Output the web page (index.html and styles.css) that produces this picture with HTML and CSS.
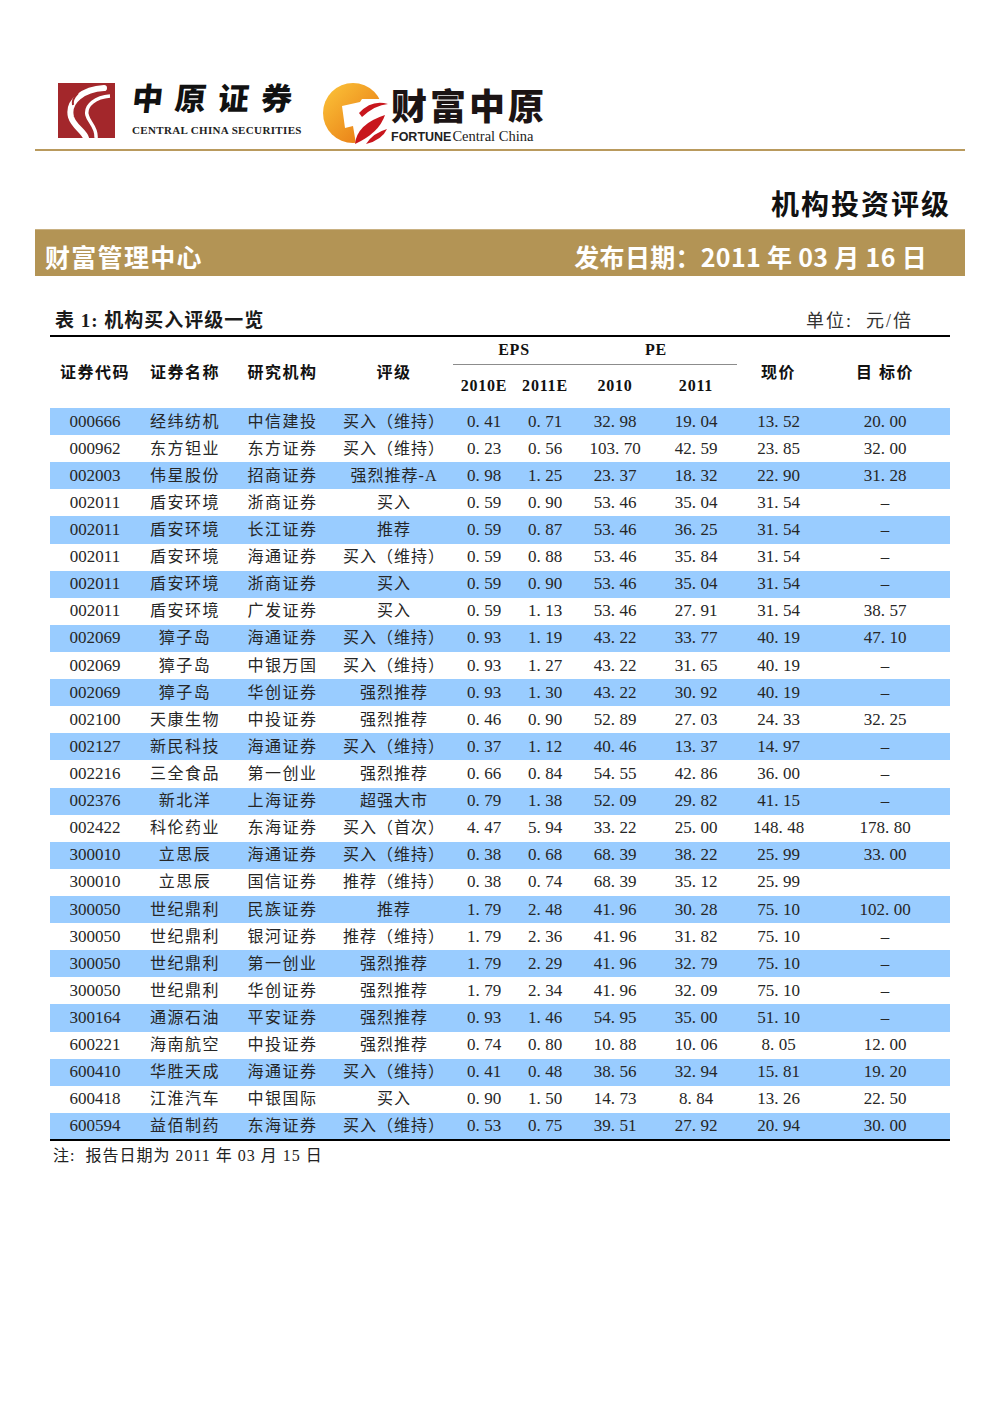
FILE: index.html
```html
<!DOCTYPE html>
<html lang="zh">
<head>
<meta charset="utf-8">
<title>机构投资评级</title>
<link rel="stylesheet" href="styles.css">
</head>
<body>
<header class="top">
  <div class="logos">
    <div class="logo ccs">
      <svg class="mark1" width="57" height="55" viewBox="0 0 57 55">
        <rect width="57" height="55" fill="#a3272b"/>
        <path d="M46 5 C26 6 9 18 13 34 C16 44 26 48 28 55" stroke="#fff" stroke-width="6" fill="none" stroke-linecap="round"/>
        <path d="M52 13 C38 14 27 22 29 32 C31 40 39 44 38 55" stroke="#fff" stroke-width="3.5" fill="none"/>
        <path d="M20 10 C16 14 14 18 15 22" stroke="#a3272b" stroke-width="2" fill="none"/>
      </svg>
      <div class="ccs-text">
        <div class="ccs-cn">中原证券</div>
        <div class="ccs-en">CENTRAL CHINA SECURITIES</div>
      </div>
    </div>
    <div class="logo fcc">
      <svg class="mark2" width="66" height="62" viewBox="0 0 66 62">
        <defs>
          <linearGradient id="og" x1="0" y1="0" x2="1" y2="1">
            <stop offset="0" stop-color="#fcc63a"/>
            <stop offset="1" stop-color="#e5700f"/>
          </linearGradient>
        </defs>
        <circle cx="31" cy="31" r="30" fill="url(#og)"/>
        <polygon points="20,24 38,20 40,17 66,17 66,62 34,62 31,44 23,46" fill="#fff"/>
        <path d="M37 31 Q50 17 66 22 Q53 23 40 35 Z" fill="#c8161d"/>
        <path d="M33 62 Q35 42 63 33 Q57 51 33 62 Z" fill="#c8161d"/>
        <path d="M44 62 Q51 51 65 47 Q60 58 44 62 Z" fill="#c8161d"/>
      </svg>
      <div class="fcc-text">
        <div class="fcc-cn">财富中原</div>
        <div class="fcc-en"><span class="fcc-bold">FORTUNE</span><span class="fcc-light">Central China</span></div>
      </div>
    </div>
  </div>
</header>
<div class="gold-rule"></div>
<div class="doc-title">机构投资评级</div>
<div class="banner">
  <span class="banner-left">财富管理中心</span>
  <span class="banner-right">发布日期：2011 年 03 月 16 日</span>
</div>
<section class="report">
  <div class="caption">
    <span class="cap-title">表 1: 机构买入评级一览</span>
    <span class="cap-unit">单位:&nbsp; 元/倍</span>
  </div>
  <table class="rating">
    <colgroup>
      <col class="c1"><col class="c2"><col class="c3"><col class="c4"><col class="c5">
      <col class="c6"><col class="c7"><col class="c8"><col class="c9"><col class="c10">
    </colgroup>
    <thead>
      <tr class="h1">
        <th rowspan="2" class="cn">证券代码</th>
        <th rowspan="2" class="cn">证券名称</th>
        <th rowspan="2" class="cn">研究机构</th>
        <th rowspan="2" class="cn">评级</th>
        <th colspan="2" class="grp">EPS</th>
        <th colspan="2" class="grp">PE</th>
        <th rowspan="2" class="cn">现价</th>
        <th rowspan="2" class="cn">目 标价</th>
      </tr>
      <tr class="h2">
        <th>2010E</th><th>2011E</th><th>2010</th><th>2011</th>
      </tr>
    </thead>
    <tbody>
      <tr class="b"><td>000666</td><td class="cn">经纬纺机</td><td class="cn">中信建投</td><td class="rt">买入（维持）</td><td>0<span class="d">.</span>41</td><td>0<span class="d">.</span>71</td><td>32<span class="d">.</span>98</td><td>19<span class="d">.</span>04</td><td>13<span class="d">.</span>52</td><td>20<span class="d">.</span>00</td></tr>
      <tr><td>000962</td><td class="cn">东方钽业</td><td class="cn">东方证券</td><td class="rt">买入（维持）</td><td>0<span class="d">.</span>23</td><td>0<span class="d">.</span>56</td><td>103<span class="d">.</span>70</td><td>42<span class="d">.</span>59</td><td>23<span class="d">.</span>85</td><td>32<span class="d">.</span>00</td></tr>
      <tr class="b"><td>002003</td><td class="cn">伟星股份</td><td class="cn">招商证券</td><td class="rt">强烈推荐-A</td><td>0<span class="d">.</span>98</td><td>1<span class="d">.</span>25</td><td>23<span class="d">.</span>37</td><td>18<span class="d">.</span>32</td><td>22<span class="d">.</span>90</td><td>31<span class="d">.</span>28</td></tr>
      <tr><td>002011</td><td class="cn">盾安环境</td><td class="cn">浙商证券</td><td class="rt">买入</td><td>0<span class="d">.</span>59</td><td>0<span class="d">.</span>90</td><td>53<span class="d">.</span>46</td><td>35<span class="d">.</span>04</td><td>31<span class="d">.</span>54</td><td>–</td></tr>
      <tr class="b"><td>002011</td><td class="cn">盾安环境</td><td class="cn">长江证券</td><td class="rt">推荐</td><td>0<span class="d">.</span>59</td><td>0<span class="d">.</span>87</td><td>53<span class="d">.</span>46</td><td>36<span class="d">.</span>25</td><td>31<span class="d">.</span>54</td><td>–</td></tr>
      <tr><td>002011</td><td class="cn">盾安环境</td><td class="cn">海通证券</td><td class="rt">买入（维持）</td><td>0<span class="d">.</span>59</td><td>0<span class="d">.</span>88</td><td>53<span class="d">.</span>46</td><td>35<span class="d">.</span>84</td><td>31<span class="d">.</span>54</td><td>–</td></tr>
      <tr class="b"><td>002011</td><td class="cn">盾安环境</td><td class="cn">浙商证券</td><td class="rt">买入</td><td>0<span class="d">.</span>59</td><td>0<span class="d">.</span>90</td><td>53<span class="d">.</span>46</td><td>35<span class="d">.</span>04</td><td>31<span class="d">.</span>54</td><td>–</td></tr>
      <tr><td>002011</td><td class="cn">盾安环境</td><td class="cn">广发证券</td><td class="rt">买入</td><td>0<span class="d">.</span>59</td><td>1<span class="d">.</span>13</td><td>53<span class="d">.</span>46</td><td>27<span class="d">.</span>91</td><td>31<span class="d">.</span>54</td><td>38<span class="d">.</span>57</td></tr>
      <tr class="b"><td>002069</td><td class="cn">獐子岛</td><td class="cn">海通证券</td><td class="rt">买入（维持）</td><td>0<span class="d">.</span>93</td><td>1<span class="d">.</span>19</td><td>43<span class="d">.</span>22</td><td>33<span class="d">.</span>77</td><td>40<span class="d">.</span>19</td><td>47<span class="d">.</span>10</td></tr>
      <tr><td>002069</td><td class="cn">獐子岛</td><td class="cn">中银万国</td><td class="rt">买入（维持）</td><td>0<span class="d">.</span>93</td><td>1<span class="d">.</span>27</td><td>43<span class="d">.</span>22</td><td>31<span class="d">.</span>65</td><td>40<span class="d">.</span>19</td><td>–</td></tr>
      <tr class="b"><td>002069</td><td class="cn">獐子岛</td><td class="cn">华创证券</td><td class="rt">强烈推荐</td><td>0<span class="d">.</span>93</td><td>1<span class="d">.</span>30</td><td>43<span class="d">.</span>22</td><td>30<span class="d">.</span>92</td><td>40<span class="d">.</span>19</td><td>–</td></tr>
      <tr><td>002100</td><td class="cn">天康生物</td><td class="cn">中投证券</td><td class="rt">强烈推荐</td><td>0<span class="d">.</span>46</td><td>0<span class="d">.</span>90</td><td>52<span class="d">.</span>89</td><td>27<span class="d">.</span>03</td><td>24<span class="d">.</span>33</td><td>32<span class="d">.</span>25</td></tr>
      <tr class="b"><td>002127</td><td class="cn">新民科技</td><td class="cn">海通证券</td><td class="rt">买入（维持）</td><td>0<span class="d">.</span>37</td><td>1<span class="d">.</span>12</td><td>40<span class="d">.</span>46</td><td>13<span class="d">.</span>37</td><td>14<span class="d">.</span>97</td><td>–</td></tr>
      <tr><td>002216</td><td class="cn">三全食品</td><td class="cn">第一创业</td><td class="rt">强烈推荐</td><td>0<span class="d">.</span>66</td><td>0<span class="d">.</span>84</td><td>54<span class="d">.</span>55</td><td>42<span class="d">.</span>86</td><td>36<span class="d">.</span>00</td><td>–</td></tr>
      <tr class="b"><td>002376</td><td class="cn">新北洋</td><td class="cn">上海证券</td><td class="rt">超强大市</td><td>0<span class="d">.</span>79</td><td>1<span class="d">.</span>38</td><td>52<span class="d">.</span>09</td><td>29<span class="d">.</span>82</td><td>41<span class="d">.</span>15</td><td>–</td></tr>
      <tr><td>002422</td><td class="cn">科伦药业</td><td class="cn">东海证券</td><td class="rt">买入（首次）</td><td>4<span class="d">.</span>47</td><td>5<span class="d">.</span>94</td><td>33<span class="d">.</span>22</td><td>25<span class="d">.</span>00</td><td>148<span class="d">.</span>48</td><td>178<span class="d">.</span>80</td></tr>
      <tr class="b"><td>300010</td><td class="cn">立思辰</td><td class="cn">海通证券</td><td class="rt">买入（维持）</td><td>0<span class="d">.</span>38</td><td>0<span class="d">.</span>68</td><td>68<span class="d">.</span>39</td><td>38<span class="d">.</span>22</td><td>25<span class="d">.</span>99</td><td>33<span class="d">.</span>00</td></tr>
      <tr><td>300010</td><td class="cn">立思辰</td><td class="cn">国信证券</td><td class="rt">推荐（维持）</td><td>0<span class="d">.</span>38</td><td>0<span class="d">.</span>74</td><td>68<span class="d">.</span>39</td><td>35<span class="d">.</span>12</td><td>25<span class="d">.</span>99</td><td></td></tr>
      <tr class="b"><td>300050</td><td class="cn">世纪鼎利</td><td class="cn">民族证券</td><td class="rt">推荐</td><td>1<span class="d">.</span>79</td><td>2<span class="d">.</span>48</td><td>41<span class="d">.</span>96</td><td>30<span class="d">.</span>28</td><td>75<span class="d">.</span>10</td><td>102<span class="d">.</span>00</td></tr>
      <tr><td>300050</td><td class="cn">世纪鼎利</td><td class="cn">银河证券</td><td class="rt">推荐（维持）</td><td>1<span class="d">.</span>79</td><td>2<span class="d">.</span>36</td><td>41<span class="d">.</span>96</td><td>31<span class="d">.</span>82</td><td>75<span class="d">.</span>10</td><td>–</td></tr>
      <tr class="b"><td>300050</td><td class="cn">世纪鼎利</td><td class="cn">第一创业</td><td class="rt">强烈推荐</td><td>1<span class="d">.</span>79</td><td>2<span class="d">.</span>29</td><td>41<span class="d">.</span>96</td><td>32<span class="d">.</span>79</td><td>75<span class="d">.</span>10</td><td>–</td></tr>
      <tr><td>300050</td><td class="cn">世纪鼎利</td><td class="cn">华创证券</td><td class="rt">强烈推荐</td><td>1<span class="d">.</span>79</td><td>2<span class="d">.</span>34</td><td>41<span class="d">.</span>96</td><td>32<span class="d">.</span>09</td><td>75<span class="d">.</span>10</td><td>–</td></tr>
      <tr class="b"><td>300164</td><td class="cn">通源石油</td><td class="cn">平安证券</td><td class="rt">强烈推荐</td><td>0<span class="d">.</span>93</td><td>1<span class="d">.</span>46</td><td>54<span class="d">.</span>95</td><td>35<span class="d">.</span>00</td><td>51<span class="d">.</span>10</td><td>–</td></tr>
      <tr><td>600221</td><td class="cn">海南航空</td><td class="cn">中投证券</td><td class="rt">强烈推荐</td><td>0<span class="d">.</span>74</td><td>0<span class="d">.</span>80</td><td>10<span class="d">.</span>88</td><td>10<span class="d">.</span>06</td><td>8<span class="d">.</span>05</td><td>12<span class="d">.</span>00</td></tr>
      <tr class="b"><td>600410</td><td class="cn">华胜天成</td><td class="cn">海通证券</td><td class="rt">买入（维持）</td><td>0<span class="d">.</span>41</td><td>0<span class="d">.</span>48</td><td>38<span class="d">.</span>56</td><td>32<span class="d">.</span>94</td><td>15<span class="d">.</span>81</td><td>19<span class="d">.</span>20</td></tr>
      <tr><td>600418</td><td class="cn">江淮汽车</td><td class="cn">中银国际</td><td class="rt">买入</td><td>0<span class="d">.</span>90</td><td>1<span class="d">.</span>50</td><td>14<span class="d">.</span>73</td><td>8<span class="d">.</span>84</td><td>13<span class="d">.</span>26</td><td>22<span class="d">.</span>50</td></tr>
      <tr class="b"><td>600594</td><td class="cn">益佰制药</td><td class="cn">东海证券</td><td class="rt">买入（维持）</td><td>0<span class="d">.</span>53</td><td>0<span class="d">.</span>75</td><td>39<span class="d">.</span>51</td><td>27<span class="d">.</span>92</td><td>20<span class="d">.</span>94</td><td>30<span class="d">.</span>00</td></tr>
    </tbody>
  </table>
  <p class="note">注:&nbsp; 报告日期为 2011 年 03 月 15 日</p>
</section>
</body>
</html>
```

FILE: styles.css
```css
* { box-sizing: border-box; }
html, body { margin: 0; padding: 0; background: #fff; }
body {
  width: 992px;
  font-family: "Liberation Serif", "Noto Sans CJK SC", serif;
  color: #1a1a1a;
}

.top { height: 149px; padding: 82px 0 0 58px; }
.logos { display: flex; align-items: flex-start; }
.logo { display: flex; align-items: flex-start; }
.mark1 { display: block; margin-top: 1px; }
.ccs-text { margin-left: 17px; width: 172px; }
.ccs-cn {
  font-family: "Liberation Sans", "Noto Sans CJK SC", sans-serif;
  font-weight: 900;
  font-size: 31px;
  line-height: 36px;
  letter-spacing: 12px;
  color: #111;
  transform: skewX(-6deg);
}
.ccs-en {
  font-family: "Liberation Serif", serif;
  font-weight: 700;
  font-size: 11px;
  line-height: 12px;
  margin-top: 6px;
  letter-spacing: 0.35px;
  color: #222;
  white-space: nowrap;
}
.fcc { margin-left: 18px; }
.mark2 { display: block; }
.fcc-text { margin-left: 3px; padding-top: 8px; }
.fcc-cn {
  font-family: "Liberation Sans", "Noto Sans CJK SC", sans-serif;
  font-weight: 900;
  font-size: 36px;
  line-height: 36px;
  letter-spacing: 3px;
  color: #1c1414;
}
.fcc-en {
  display: flex;
  align-items: baseline;
  margin-top: 3px;
  white-space: nowrap;
  color: #222;
}
.fcc-bold {
  font-family: "Liberation Sans", sans-serif;
  font-weight: 700;
  font-size: 12.5px;
  line-height: 14px;
  margin-right: 1px;
}
.fcc-light {
  font-family: "Liberation Serif", serif;
  font-size: 14.5px;
  line-height: 14px;
}

.gold-rule { height: 2px; margin: 0 27px 0 35px; background: #b99a5d; }

.doc-title {
  height: 78px;
  padding: 34px 41px 0 0;
  text-align: right;
  font-family: "Noto Sans CJK SC", sans-serif;
  font-weight: 700;
  font-size: 28px;
  line-height: 36px;
  letter-spacing: 2px;
  color: #111;
}

.banner {
  height: 47px;
  margin: 0 27px 0 35px;
  padding: 6px 38px 0 10px;
  background: #b39455;
  border-top: 1px solid #c9b182;
  display: flex;
  justify-content: space-between;
  align-items: center;
  font-family: "Noto Sans CJK SC", sans-serif;
  font-weight: 700;
  font-size: 25px;
  line-height: 30px;
  color: #fff;
}
.banner-left { letter-spacing: 1.3px; }
.banner-right { letter-spacing: 0.3px; }

.report { margin: 0 42px 0 50px; }
.caption {
  height: 59px;
  display: flex;
  justify-content: space-between;
  align-items: flex-end;
  padding: 0 37px 1px 5px;
}
.cap-title {
  font-family: "Liberation Serif", "Noto Sans CJK SC", serif;
  font-weight: 700;
  font-size: 19px;
  line-height: 26px;
  letter-spacing: 1px;
}
.cap-unit {
  font-family: "Liberation Serif", "Noto Sans CJK SC", serif;
  font-size: 18px;
  line-height: 26px;
  color: #333;
  letter-spacing: 2px;
}

.rating {
  width: 900px;
  border-collapse: collapse;
  table-layout: fixed;
  border-top: 2px solid #000;
  border-bottom: 2px solid #000;
}
.c1 { width: 90px; } .c2 { width: 90px; } .c3 { width: 105px; } .c4 { width: 118px; }
.c5 { width: 62px; } .c6 { width: 60px; } .c7 { width: 80px; } .c8 { width: 82px; }
.c9 { width: 83px; } .c10 { width: 130px; }

.rating th {
  padding: 0;
  text-align: center;
  font-family: "Liberation Serif", "Noto Sans CJK SC", serif;
  font-weight: 700;
  font-size: 16px;
  color: #111;
  letter-spacing: 0.8px;
}
.rating th.cn { letter-spacing: 1.5px; padding-bottom: 3px; }
.rating .h1 { height: 28px; }
.rating .h1 th.grp { border-bottom: 1px solid #8c8c8c; vertical-align: middle; padding-bottom: 0; }
.rating .h2 { height: 44px; }
.rating .h2 th { vertical-align: middle; }

.rating td {
  height: 27.12px;
  padding: 0;
  text-align: center;
  vertical-align: middle;
  font-family: "Liberation Serif", "Noto Sans CJK SC", serif;
  font-size: 17px;
  line-height: 20px;
  letter-spacing: 0;
  color: #262626;
  white-space: nowrap;
}
.rating td .d { padding-right: 4.5px; }
.rating td.cn { font-size: 16px; letter-spacing: 1.5px; }
.rating td.rt { font-size: 16px; letter-spacing: 1px; }
.rating tr.b td { background: #99ccff; }

.note {
  margin: 4px 0 0 3px;
  font-size: 16px;
  line-height: 22px;
  letter-spacing: 1px;
  color: #222;
}
```
